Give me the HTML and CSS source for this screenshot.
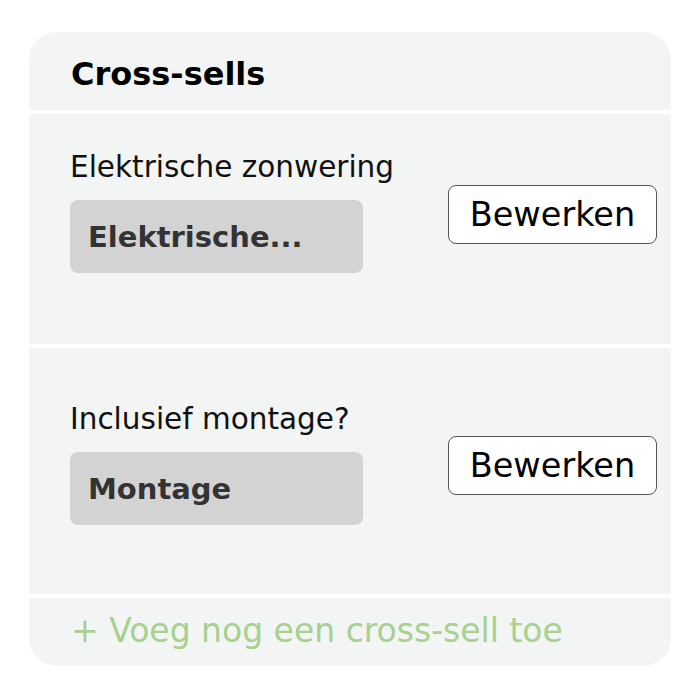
FILE: index.html
```html
<!DOCTYPE html>
<html lang="nl">
<head>
    <meta charset="UTF-8">
    <meta name="viewport" content="width=device-width, initial-scale=1.0">
    <title>Cross-sells</title>
    <link rel="stylesheet" href="styles.css">
</head>
<body>
    <div class="card">
        <!-- Header -->
        <div class="card-header">
            <h2>Cross-sells</h2>
        </div>

        <!-- Cross-sell rows -->
        <div class="row first">
            <div class="field">
                <label>Elektrische zonwering</label>
                <div class="value">Elektrische...</div>
            </div>
            <button class="edit-btn">Bewerken</button>
        </div>

        <div class="row second">
            <div class="field">
                <label>Inclusief montage?</label>
                <div class="value">Montage</div>
            </div>
            <button class="edit-btn">Bewerken</button>
        </div>

        <!-- Add link -->
        <div class="card-footer">
            <a href="javascript:void(0);" class="add-link">+ Voeg nog een cross-sell toe</a>
        </div>
    </div>
</body>
</html>
```

FILE: styles.css
```css
body {
    margin: 0;
    background-color: #fff;
    font-family: "DejaVu Sans", "Open Sans", sans-serif;
    color: #111;
}
.card {
    margin: 32px 29px 0 29px;
    width: 642px;
    border-radius: 28px;
    overflow: hidden;
    display: flex;
    flex-direction: column;
    gap: 4px;
}
.card-header,
.row,
.card-footer {
    background-color: #f3f5f4;
}
.card-header {
    height: 78px;
    padding: 0 42px;
    display: flex;
    align-items: center;
}
.card-header h2 {
    margin: 0;
    font-size: 32px;
    font-weight: bold;
    color: #000;
    padding-top: 5px;
}
.row {
    display: flex;
    justify-content: space-between;
    align-items: flex-start;
    padding: 0 14px 0 41px;
}
.row.first { height: 230px; }
.row.second { height: 246px; }
.row.first .field { margin-top: 36px; }
.row.first .edit-btn { margin-top: 71px; }
.row.second .field { margin-top: 54px; }
.row.second .edit-btn { margin-top: 88px; }
.field {
    display: flex;
    flex-direction: column;
    gap: 16px;
}
.field label {
    font-size: 29.5px;
    color: #111;
    line-height: 34px;
}
.value {
    width: 293px;
    height: 73px;
    box-sizing: border-box;
    padding-left: 18px;
    background-color: #d3d3d3;
    border-radius: 8px;
    display: flex;
    align-items: center;
    font-size: 29px;
    font-weight: bold;
    color: #333;
}
.edit-btn {
    width: 209px;
    height: 59px;
    padding: 0;
    background-color: #fff;
    border: 1px solid #555;
    border-radius: 8px;
    font-family: "DejaVu Sans", sans-serif;
    font-size: 33.5px;
    color: #000;
    cursor: pointer;
}
.card-footer {
    height: 68px;
    padding: 0 42px;
    display: flex;
    align-items: center;
}
a.add-link {
    font-size: 33px;
    color: #a6d18e;
    text-decoration: none;
    margin-top: -4px;
}
```
